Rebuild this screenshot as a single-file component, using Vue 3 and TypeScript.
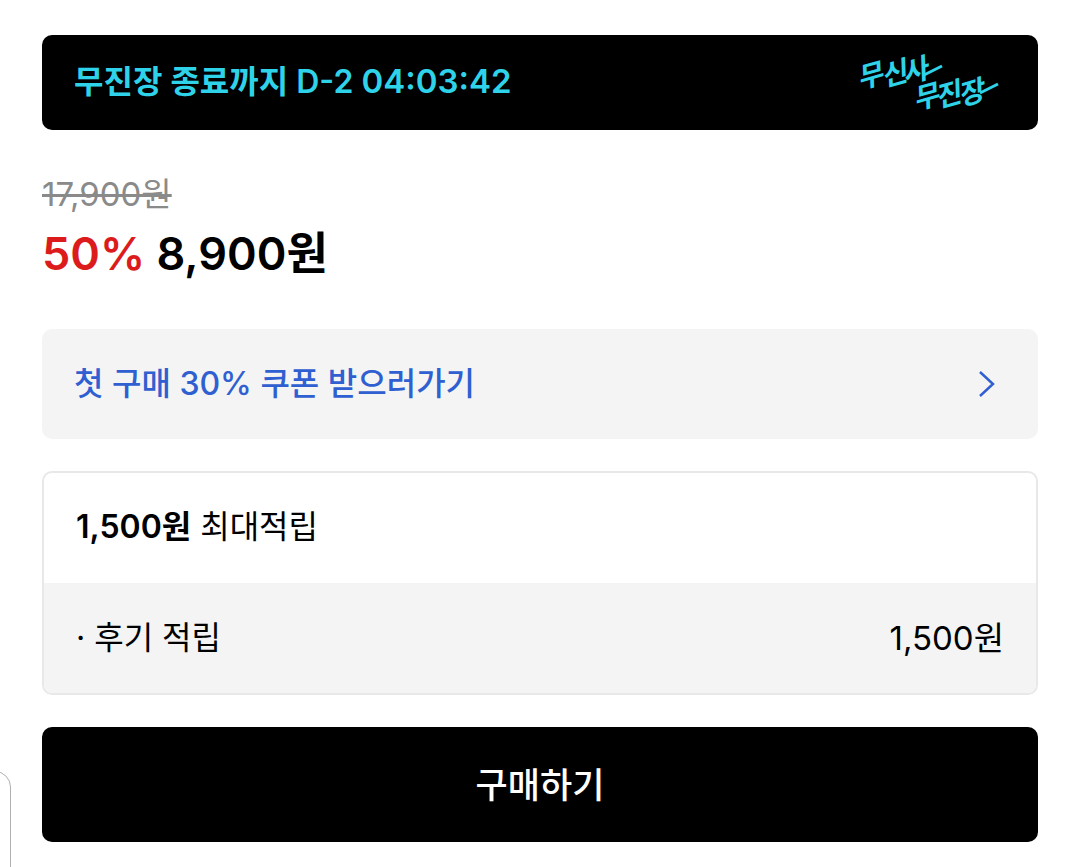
<script setup lang="ts">
import { computed, onMounted, onUnmounted, ref } from 'vue'

const props = withDefaults(defineProps<{ live?: boolean }>(), { live: false })

const remaining = ref<number>(2 * 86400 + 4 * 3600 + 3 * 60 + 42)
const regularPrice = 17900
const salePrice = 8900
const discount = 50
const reward = 1500

const won = (value: number): string => value.toLocaleString('en-US') + '원'
const pad = (value: number): string => String(value).padStart(2, '0')

const dayLabel = computed<string>(() => `D-${Math.floor(remaining.value / 86400)}`)
const clock = computed<string>(() => {
  const total = remaining.value
  const hours = Math.floor((total % 86400) / 3600)
  const minutes = Math.floor((total % 3600) / 60)
  return `${pad(hours)}:${pad(minutes)}:${pad(total % 60)}`
})

let timer: number | undefined
onMounted(() => {
  if (props.live) {
    timer = window.setInterval(() => {
      remaining.value = Math.max(0, remaining.value - 1)
    }, 1000)
  }
})
onUnmounted(() => window.clearInterval(timer))
</script>

<template>
  <main class="page">
    <section class="banner">
      <p class="banner-text">무진장 종료까지 {{ dayLabel }} <span class="clock">{{ clock }}</span></p>
      <svg class="logo" viewBox="0 0 140 54" role="img" aria-label="무신사 무진장">
        <text class="logo-text" x="0 24 45 56 78 101" y="34 32 29 55 53 51" rotate="-16">무신사무진장</text>
        <path class="logo-tail" d="M64 20 L82 11 M120 38 L138 29" />
      </svg>
    </section>

    <section class="price">
      <del class="regular">{{ won(regularPrice) }}</del>
      <p class="sale"><span class="rate">{{ discount }}%</span> {{ won(salePrice) }}</p>
    </section>

    <a class="coupon" href="#coupon">
      <span>첫 구매 30% 쿠폰 받으러가기</span>
      <svg class="chevron" viewBox="0 0 18 28" aria-hidden="true">
        <path d="M2 2 L15 14 L2 26" />
      </svg>
    </a>

    <section class="reward">
      <p class="reward-head"><strong>{{ won(reward) }}</strong> 최대적립</p>
      <dl class="reward-row">
        <dt>· 후기 적립</dt>
        <dd>{{ won(reward) }}</dd>
      </dl>
    </section>

    <button class="buy" type="button">구매하기</button>
    <div class="side-panel" aria-hidden="true"></div>
  </main>
</template>

<style>
body {
  margin: 0;
  background: #fff;
}
</style>

<style scoped>
.page {
  position: relative;
  display: flex;
  flex-direction: column;
  box-sizing: border-box;
  min-height: 100vh;
  padding: 35px 41px 25px 42px;
  overflow: hidden;
  color: #000;
  font-family: Inter, "Noto Sans CJK KR", sans-serif;
  font-size: 32px;
  line-height: 48px;
}

p,
dl,
dd {
  margin: 0;
}

.banner {
  display: flex;
  align-items: center;
  justify-content: space-between;
  box-sizing: border-box;
  min-height: 95px;
  padding: 0 38px 2px 32px;
  border-radius: 10px;
  background: #000;
  color: #2fd3e9;
  font-weight: 600;
}

.clock {
  font-size: 33px;
}

.logo {
  width: 140px;
  height: 54px;
  overflow: visible;
}

.logo-text {
  fill: #2fd3e9;
  font-family: "Noto Sans CJK KR", sans-serif;
  font-size: 28px;
  font-style: italic;
  font-weight: 700;
}

.logo-tail {
  fill: none;
  stroke: #2fd3e9;
  stroke-width: 3;
}

.price {
  display: flex;
  flex-direction: column;
  align-items: flex-start;
  padding: 40px 0;
}

.regular {
  color: #8a8a8a;
  font-size: 33px;
  text-decoration-thickness: 3px;
}

.sale {
  font-size: 45px;
  font-weight: 600;
  line-height: 71px;
}

.rate {
  color: #dc1c1c;
}

.coupon {
  display: flex;
  align-items: center;
  justify-content: space-between;
  box-sizing: border-box;
  min-height: 110px;
  padding: 0 42px 0 32px;
  border-radius: 10px;
  background: #f4f4f4;
  color: #2f5fd0;
  font-weight: 500;
  text-decoration: none;
}

.chevron {
  width: 18px;
  height: 28px;
  fill: none;
  stroke: currentColor;
  stroke-width: 2.5;
}

.reward {
  margin: 32px 0;
  border: 2px solid #e8e8e8;
  border-radius: 10px;
  overflow: hidden;
}

.reward-head {
  padding: 30px 32px 32px;
}

.reward-head strong {
  font-weight: 600;
}

.reward-row {
  display: flex;
  justify-content: space-between;
  padding: 31px 32px;
  background: #f4f4f4;
}

.reward-row dd {
  font-size: 33px;
}

.buy {
  min-height: 115px;
  padding: 0;
  border: 0;
  border-radius: 10px;
  background: #000;
  color: #fff;
  font-family: inherit;
  font-size: 35px;
  font-weight: 500;
  line-height: 52px;
}

.side-panel {
  position: absolute;
  bottom: -20px;
  left: -60px;
  box-sizing: border-box;
  width: 71px;
  height: 116px;
  border: 1px solid #b0b0b0;
  border-radius: 16px;
}
</style>
